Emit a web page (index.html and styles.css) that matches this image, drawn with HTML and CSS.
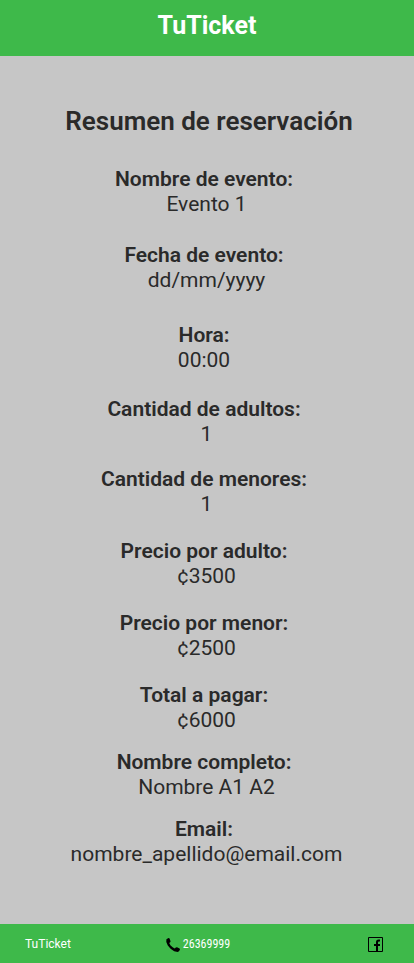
FILE: index.html
```html
<!DOCTYPE html>
<html lang="es">
<head>
<meta charset="utf-8">
<meta name="viewport" content="width=device-width, initial-scale=1">
<title>TuTicket</title>
<link rel="stylesheet" href="styles.css">
</head>
<body>
<header class="topbar">TuTicket</header>
<main class="summary">
  <h1 class="title">Resumen de reservación</h1>
  <dl class="details">
    <div class="item gap-xl"><dt>Nombre de evento:</dt><dd>Evento 1</dd></div>
    <div class="item gap-xxl"><dt>Fecha de evento:</dt><dd>dd/mm/yyyy</dd></div>
    <div class="item gap-lg"><dt>Hora:</dt><dd class="time">00:00</dd></div>
    <div class="item gap-sm"><dt>Cantidad de adultos:</dt><dd>1</dd></div>
    <div class="item"><dt>Cantidad de menores:</dt><dd>1</dd></div>
    <div class="item"><dt>Precio por adulto:</dt><dd>¢3500</dd></div>
    <div class="item"><dt>Precio por menor:</dt><dd>¢2500</dd></div>
    <div class="item gap-xs"><dt>Total a pagar:</dt><dd>¢6000</dd></div>
    <div class="item gap-xs"><dt>Nombre completo:</dt><dd>Nombre A1 A2</dd></div>
    <div class="item"><dt>Email:</dt><dd>nombre_apellido@email.com</dd></div>
  </dl>
</main>
<footer class="footer">
  <span>TuTicket</span>
  <a class="phone" href="tel:26369999">
    <svg width="14" height="14" viewBox="0 0 14 14" aria-hidden="true"><path d="M0.4 1.2 2.5 0 3.4 0.3 4.6 3.2 4.2 4.2 3.2 5 4.6 7.4 7 9.6 8.8 10.6 9.8 9.4 11 9.2 13.6 10.4 14 11.4 13 13.2 11.6 14 8.2 13.2 4.6 10.8 1.8 7.4 0.3 4Z"/></svg>
    <span class="number">26369999</span>
  </a>
  <a class="social" href="#" aria-label="Facebook">
    <svg width="15" height="15" viewBox="0 0 15 15" aria-hidden="true"><path d="M0.5 0.5H14.5V14.5H0.5Z" fill="none" stroke="#000"/><path d="M8 14V9H6V7H8V5Q8 2.5 10.5 2.5H12V4.5H11Q10 4.5 10 5.5V7H12V9H10V14Z"/></svg>
  </a>
</footer>
</body>
</html>
```

FILE: styles.css
```css
* {
  box-sizing: border-box;
}

body {
  margin: 0;
  min-height: 100vh;
  display: flex;
  flex-direction: column;
  background: #c6c6c6;
  color: #2a2a2a;
  font-family: Roboto, sans-serif;
}

.topbar {
  padding: 10px 0 14px;
  background: #3eb94a;
  color: #fff;
  font-size: 25px;
  font-weight: 700;
  line-height: 32px;
  text-align: center;
}

.summary {
  flex: 1;
  padding: 49px 0 24px;
  text-align: center;
}

.title {
  margin: 0 0 30px;
  padding-left: 4px;
  font-size: 26px;
  font-weight: 600;
  line-height: 32px;
}

.details {
  margin: 0;
  padding-right: 6px;
  font-size: 21px;
  line-height: 25px;
}

.item {
  margin-bottom: 22px;
}

.gap-xxl { margin-bottom: 30px; }
.gap-xl { margin-bottom: 26px; }
.gap-lg { margin-bottom: 24px; }
.gap-sm { margin-bottom: 20px; }
.gap-xs { margin-bottom: 17px; }

dt {
  font-weight: 600;
}

dd {
  margin: 0;
  padding-left: 5px;
}

.time {
  padding-left: 0;
}

.footer {
  display: grid;
  grid-template-columns: 1fr auto 1fr;
  align-items: center;
  padding: 2px 31px 0 25px;
  background: #3eb94a;
  color: #fff;
  font-size: 12px;
  line-height: 37px;
}

.phone {
  display: flex;
  align-items: center;
  gap: 3px;
  padding-right: 12px;
  color: inherit;
  text-decoration: none;
}

.number {
  font-family: "Roboto Condensed", Roboto, sans-serif;
  font-size: 12px;
}

.social {
  display: flex;
  justify-content: flex-end;
  color: #000;
}
```
